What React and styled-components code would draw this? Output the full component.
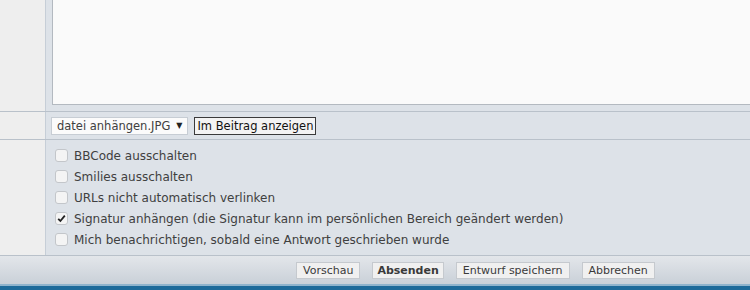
import React from "react";
import styled, { createGlobalStyle } from "styled-components";

const farben = {
  links: "#eeeeee",
  feld: "#dde2e8",
  linie: "#b9c1ca",
  text: "#404040",
  blau: "#1d6a9a",
};

const GlobalStyle = createGlobalStyle`
  * {
    box-sizing: border-box;
    margin: 0;
    padding: 0;
  }
  body {
    overflow: hidden;
    background: ${farben.feld};
    font-family: "DejaVu Sans", Verdana, sans-serif;
    font-size: 12px;
    color: ${farben.text};
  }
`;

const Seite = styled.div`
  width: 905px;
`;

const Zeile = styled.div`
  display: grid;
  grid-template-columns: 46px 1fr;
  border-bottom: 1px solid ${farben.linie};
`;

const Label = styled.div`
  background: ${farben.links};
  border-right: 1px solid #c6ced7;
`;

const Feld = styled.div`
  background: ${farben.feld};
  padding: ${(p) => p.$pad || "0 6px"};
  display: flex;
  flex-direction: ${(p) => (p.$spalte ? "column" : "row")};
  align-items: ${(p) => (p.$spalte ? "stretch" : "center")};
  gap: ${(p) => p.$gap || "0"};
  height: ${(p) => p.$hoehe || "auto"};
`;

const Textfeld = styled.div`
  height: 105px;
  background: #fafafa;
  border: 1px solid #b3b9c0;
  border-top: none;
  width: 100%;
`;

const Auswahl = styled.div`
  display: flex;
  align-items: center;
  height: 18px;
  padding: 0 5px;
  background: #fbfbfb;
  border: 1px solid #c7cdd4;
  gap: 6px;
  font-size: 11.5px;
`;

const Pfeil = styled.span`
  font-size: 8px;
  color: #222;
`;

const Knopf = styled.button`
  font-family: inherit;
  font-size: ${(p) => (p.$fokus ? "11.5px" : "11px")};
  color: ${(p) => (p.$fokus ? "#111" : "#3a3a3a")};
  font-weight: ${(p) => (p.$fett ? "bold" : "normal")};
  height: ${(p) => (p.$fokus ? "18px" : "17px")};
  padding: 0 ${(p) => (p.$fokus ? "2px" : p.$fett ? "4px" : "6px")};
  background: ${(p) => (p.$fokus ? "#f3f3f3" : "#f0f0f0")};
  border: 1px solid ${(p) => (p.$fokus ? "#3a3a3a" : "#c5c9ce")};
`;

const Option = styled.label`
  display: flex;
  align-items: center;
  height: 21px;
  padding-left: 3px;
  gap: 6px;
`;

const Kasten = styled.span`
  width: 13px;
  height: 13px;
  border: 1px solid #c3c6ca;
  border-radius: 3px;
  background: #f4f4f4;
  display: flex;
  align-items: center;
  justify-content: center;
`;

const Leiste = styled.div`
  height: 28px;
  background: linear-gradient(#e3e6ea, #c9d0d8);
  display: flex;
  align-items: center;
  gap: 12px;
  padding-left: 296px;
`;

const Fuss = styled.div`
  height: 7px;
  border-top: 2px solid #8fb3cc;
  background: ${farben.blau};
`;

const optionen = [
  ["BBCode ausschalten", false],
  ["Smilies ausschalten", false],
  ["URLs nicht automatisch verlinken", false],
  ["Signatur anhängen (die Signatur kann im persönlichen Bereich geändert werden)", true],
  ["Mich benachrichtigen, sobald eine Antwort geschrieben wurde", false],
];

export default function App() {
  return (
    <>
      <GlobalStyle />
      <Seite>
        <Zeile>
          <Label />
          <Feld $pad="0 6px 6px 6px">
            <Textfeld />
          </Feld>
        </Zeile>
        <Zeile>
          <Label />
          <Feld $pad="4px 6px 4px 5px" $gap="6px" $hoehe="27px">
            <Auswahl>
              datei anhängen.JPG <Pfeil>▼</Pfeil>
            </Auswahl>
            <Knopf $fokus>Im Beitrag anzeigen</Knopf>
          </Feld>
        </Zeile>
        <Zeile>
          <Label />
          <Feld $pad="5px 6px 5px 6px" $spalte>
            {optionen.map(([text, an]) => (
              <Option key={text}>
                <Kasten>
                  {an && (
                    <svg width="9" height="9" viewBox="0 0 9 9">
                      <path d="M1.2 4.8 L3.4 7 L7.8 1.6" fill="none" stroke="#222" strokeWidth="1.8" />
                    </svg>
                  )}
                </Kasten>
                {text}
              </Option>
            ))}
          </Feld>
        </Zeile>
        <Leiste>
          <Knopf>Vorschau</Knopf>
          <Knopf $fett>Absenden</Knopf>
          <Knopf>Entwurf speichern</Knopf>
          <Knopf>Abbrechen</Knopf>
        </Leiste>
        <Fuss />
      </Seite>
    </>
  );
}
